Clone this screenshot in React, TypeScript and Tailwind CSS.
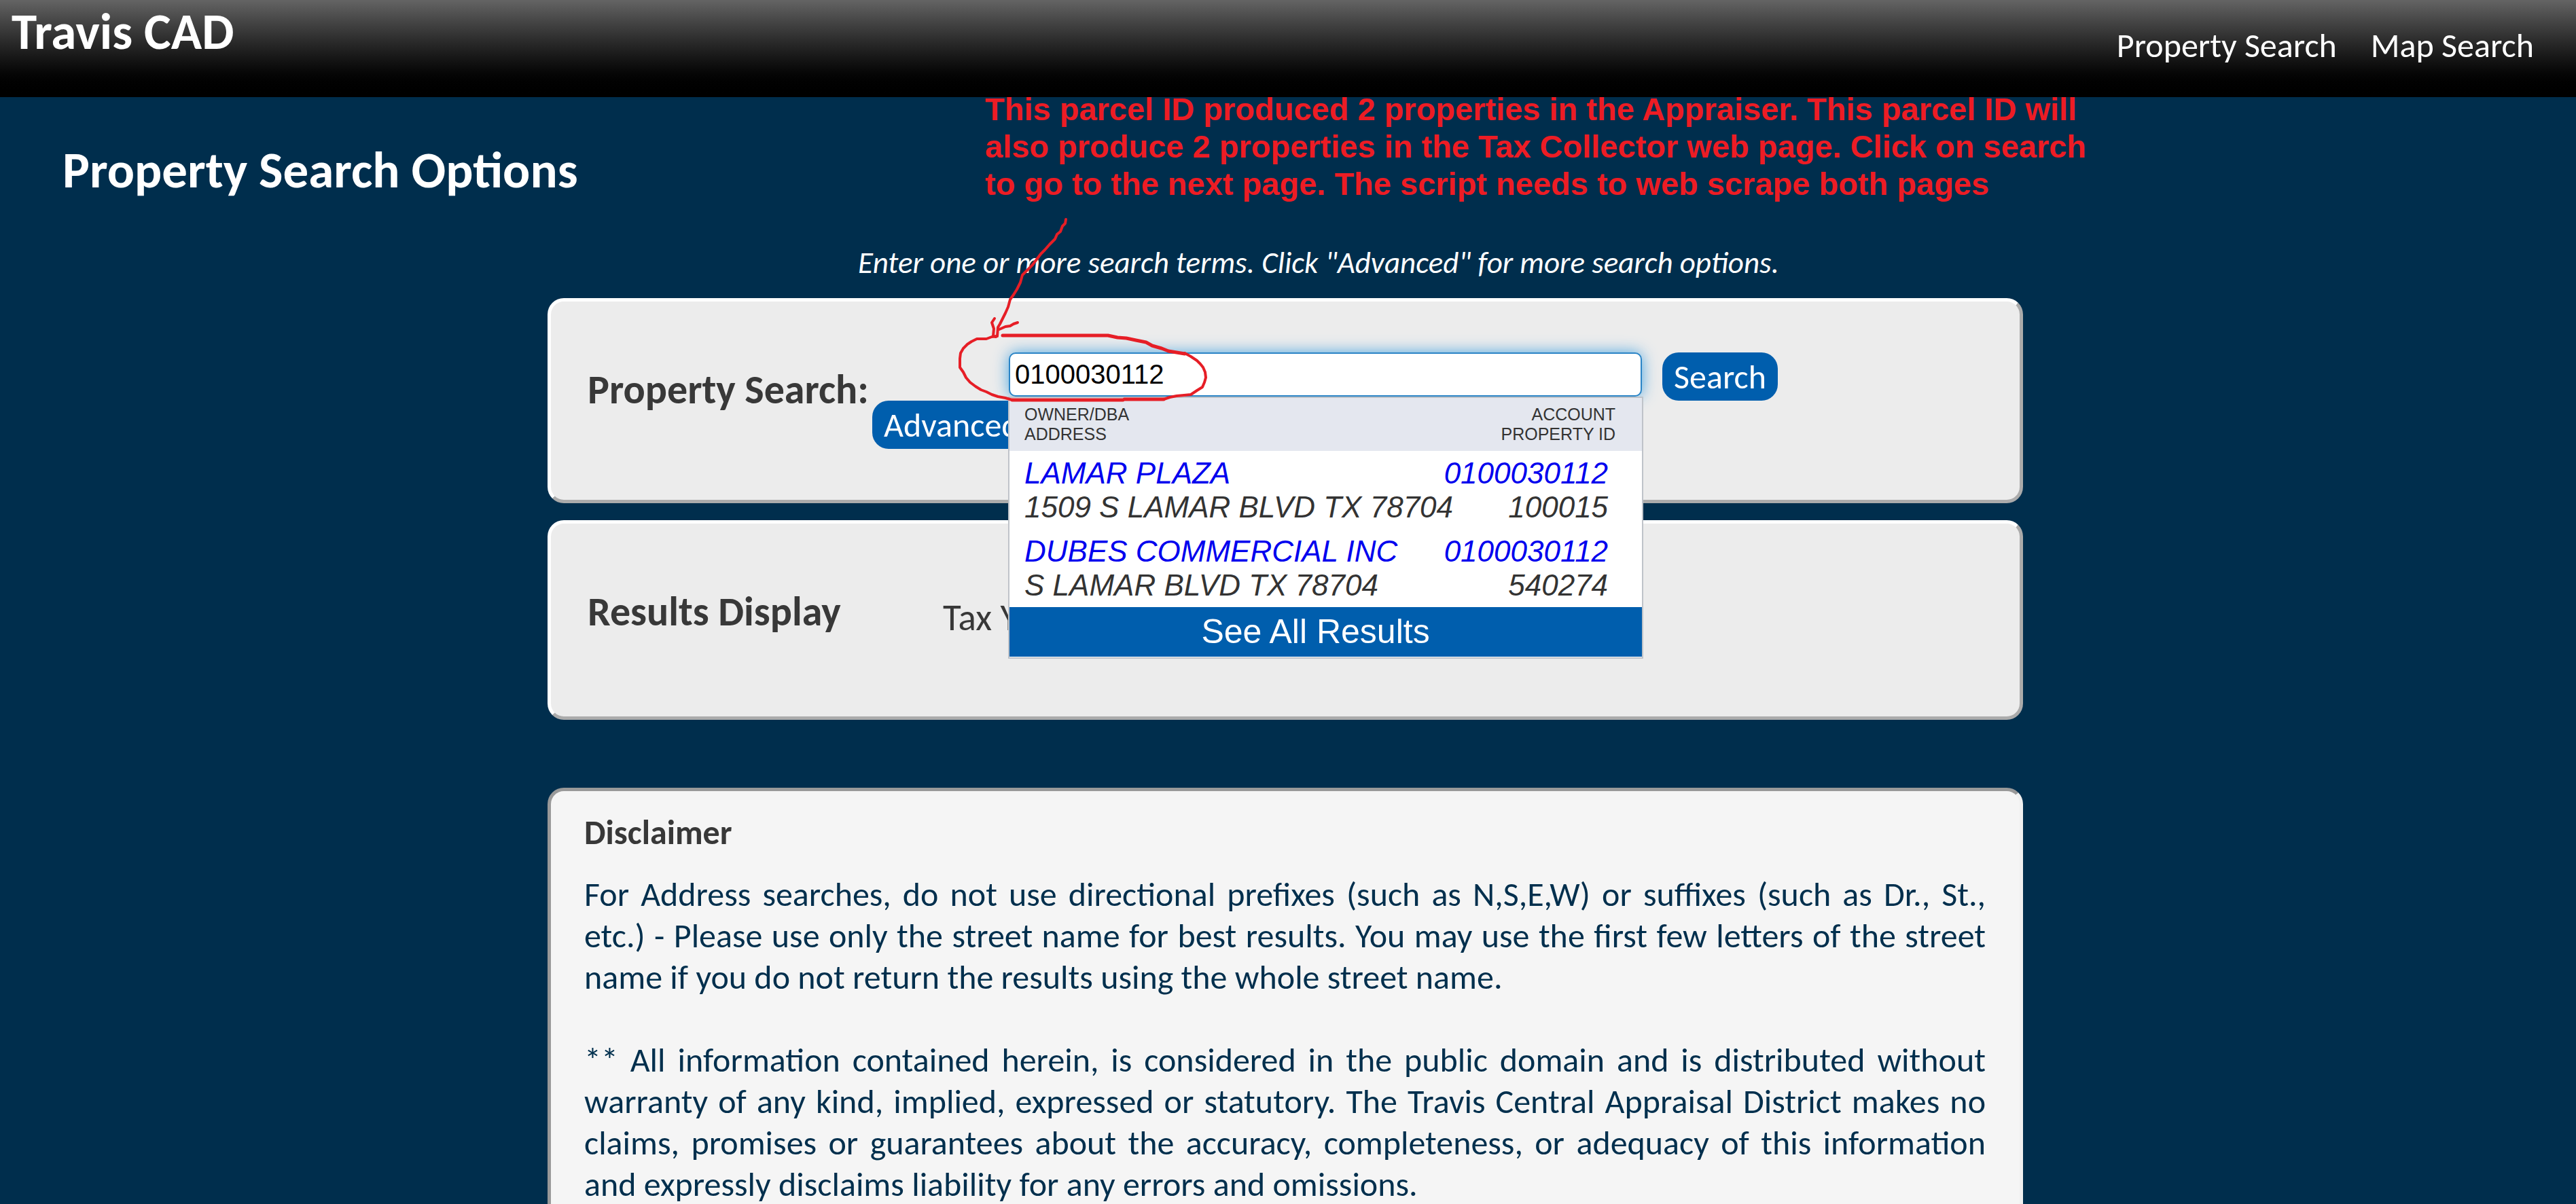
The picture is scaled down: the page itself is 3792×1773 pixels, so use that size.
const navLinks = ["Property Search", "Map Search"];

const matches = [
  {
    owner: "LAMAR PLAZA",
    account: "0100030112",
    address: "1509 S LAMAR BLVD TX 78704",
    propertyId: "100015",
  },
  {
    owner: "DUBES COMMERCIAL INC",
    account: "0100030112",
    address: "S LAMAR BLVD TX 78704",
    propertyId: "540274",
  },
];

function Header() {
  return (
    <header className="flex h-[143px] items-start justify-between bg-linear-to-b from-[#646464] to-black pr-[62px] pl-[17px] text-white">
      <a href="#home" className="pt-px text-[75px] leading-[92px] font-bold">
        Travis CAD
      </a>
      <nav className="flex gap-[50px] pt-9 text-[50px] leading-[61px]">
        {navLinks.map((label) => (
          <a key={label} href="#search">
            {label}
          </a>
        ))}
      </nav>
    </header>
  );
}

function Suggestions() {
  return (
    <div className="absolute top-full -right-[2px] -left-px z-10 border-2 border-[#bfc3c9] bg-white pb-px font-['Liberation_Sans',Arial,sans-serif] text-[#333]">
      <div className="flex justify-between bg-[#e4e7ef] py-[10px] pr-[39px] pl-[22px] text-[25px] leading-[29px]">
        <div>
          <p>OWNER/DBA</p>
          <p>ADDRESS</p>
        </div>
        <div className="text-right">
          <p>ACCOUNT</p>
          <p>PROPERTY ID</p>
        </div>
      </div>
      <ul className="text-[44px] leading-[50px] whitespace-nowrap italic">
        {matches.map((m) => (
          <li key={m.propertyId}>
            <a href="#property" className="block pt-2 pr-[50px] pb-[7px] pl-[22px]">
              <span className="flex justify-between text-[#0000ee]">
                <span>{m.owner}</span>
                <span>{m.account}</span>
              </span>
              <span className="flex justify-between">
                <span>{m.address}</span>
                <span>{m.propertyId}</span>
              </span>
            </a>
          </li>
        ))}
      </ul>
      <button
        type="button"
        className="block h-[73px] w-full bg-[#005ead] pr-[30px] text-[50px] leading-[73px] text-white"
      >
        See All Results
      </button>
    </div>
  );
}

function SearchPanel() {
  return (
    <form className="flex min-h-[302px] items-start rounded-3xl border-5 border-t-white border-r-[#ababab] border-b-[#ababab] border-l-white bg-[#ececec] pt-[75px] pr-[356px] pl-[54px]">
      <label
        htmlFor="property-search"
        className="mt-[18px] w-[419px] shrink-0 text-[60px] leading-[73px] font-bold whitespace-nowrap"
      >
        Property Search:
      </label>
      <div className="mt-[71px] w-[201px] shrink-0">
        <button
          type="button"
          className="rounded-3xl bg-[#005ead] px-[17px] py-[5px] text-[50px] leading-[61px] whitespace-nowrap text-white"
        >
          Advanced
        </button>
      </div>
      <div className="relative mr-[30px] flex-1">
        <input
          id="property-search"
          type="text"
          defaultValue="0100030112"
          className="block h-[65px] w-full rounded-[10px] border-2 border-[#2a84c6] bg-white pl-[7px] font-['Liberation_Sans',Arial,sans-serif] text-[40px] text-black shadow-[0_0_22px_#4da6e0] outline-none"
        />
        <Suggestions />
      </div>
      <button
        type="submit"
        className="rounded-3xl bg-[#005ead] px-[17px] py-[5px] text-[50px] leading-[61px] text-white"
      >
        Search
      </button>
    </form>
  );
}

function ResultsPanel() {
  return (
    <section className="mt-[25px] flex min-h-[294px] items-start rounded-3xl border-5 border-t-white border-r-[#ababab] border-b-[#ababab] border-l-white bg-[#ececec] pt-[93px] pl-[54px]">
      <h2 className="w-[523px] text-[60px] leading-[73px] font-bold">
        Results Display
      </h2>
      <p className="mt-3 text-[55px] leading-[67px]">Tax Year</p>
    </section>
  );
}

function Disclaimer() {
  return (
    <section className="mt-[100px] flex-1 rounded-t-3xl border-5 border-b-0 border-t-[#999] border-r-[#f0f0f0] border-l-[#999] bg-[#f5f5f5] pt-[30px] pr-[50px] pl-[49px] text-[50px] leading-[61px]">
      <h2 className="font-bold">Disclaimer</h2>
      <div className="mt-[30px] flex flex-col gap-[61px] text-justify text-[#002f4d]">
        <p>
          For Address searches, do not use directional prefixes (such as
          N,S,E,W) or suffixes (such as Dr., St., etc.) - Please use only the
          street name for best results. You may use the first few letters of
          the street name if you do not return the results using the whole
          street name.
        </p>
        <p>
          ** All information contained herein, is considered in the public
          domain and is distributed without warranty of any kind, implied,
          expressed or statutory. The Travis Central Appraisal District makes
          no claims, promises or guarantees about the accuracy, completeness,
          or adequacy of this information and expressly disclaims liability for
          any errors and omissions.
        </p>
      </div>
    </section>
  );
}

function Annotation() {
  return (
    <>
      <p className="absolute -top-[10px] left-[1450px] z-20 font-['Liberation_Sans',Arial,sans-serif] text-[47px] leading-[55px] font-bold whitespace-nowrap text-[#ed1c24]">
        This parcel ID produced 2 properties in the Appraiser. This parcel ID
        will
        <br />
        also produce 2 properties in the Tax Collector web page. Click on
        search
        <br />
        to go to the next page. The script needs to web scrape both pages
      </p>
      <svg
        aria-hidden="true"
        className="pointer-events-none absolute top-[167px] left-[1400px] z-20"
        width="400"
        height="300"
        viewBox="1400 310 400 300"
        fill="none"
        stroke="#e61e26"
        strokeLinecap="round"
        strokeLinejoin="round"
      >
        <g strokeWidth="4">
          <path d="M1569 323L1568 329L1564 333L1561 341L1556 345L1553 352L1545 360L1538 368L1532 374L1526 382L1520 390L1512 398L1505 405L1502 416L1497 426L1492 434L1487 441L1484 452L1480 461L1476 469L1472 477L1469 482L1468 495" />
          <path d="M1464 469L1460 475L1463 484L1462 495L1466 496" />
          <path d="M1498 475L1492 477L1487 480L1480 481L1471 485" />
          <path d="M1467 495L1460 496L1452 499L1438 499L1430 503L1424 507L1418 513L1414 520L1413 528L1413 541L1418 548L1422 556L1428 563L1436 569L1444 574L1452 577L1460 581L1469 584L1480 586L1490 589" />
          <path d="M1713 588L1722 585L1732 583L1743 582L1753 581L1762 575L1770 570L1773 563L1775 556L1774 548L1771 541L1767 536L1762 531L1753 525L1744 520" />
        </g>
        <g strokeWidth="5">
          <path d="M1476 494L1631 494L1645 497L1658 498L1672 501L1687 504L1696 509L1710 513L1720 517L1732 519L1744 521" />
          <path d="M1490 589L1653 589M1655 588L1713 588" />
        </g>
      </svg>
    </>
  );
}

export default function App() {
  return (
    <div className="flex min-h-screen flex-col bg-[#002e4d] font-[Calibri,Carlito,Lato,sans-serif] text-[#383838]">
      <Header />
      <main className="relative flex flex-1 flex-col pt-[62px]">
        <h1 className="pl-[92px] text-[75px] leading-[92px] font-bold text-white">
          Property Search Options
        </h1>
        <div className="flex flex-1 flex-col pt-[62px] pr-2">
          <div className="mx-auto flex w-full max-w-[2172px] flex-1 flex-col">
            <p className="mb-[25px] pl-[98px] text-center text-[45px] leading-[55px] text-white italic">
              Enter one or more search terms. Click "Advanced" for more search
              options.
            </p>
            <SearchPanel />
            <ResultsPanel />
            <Disclaimer />
          </div>
        </div>
        <Annotation />
      </main>
    </div>
  );
}
